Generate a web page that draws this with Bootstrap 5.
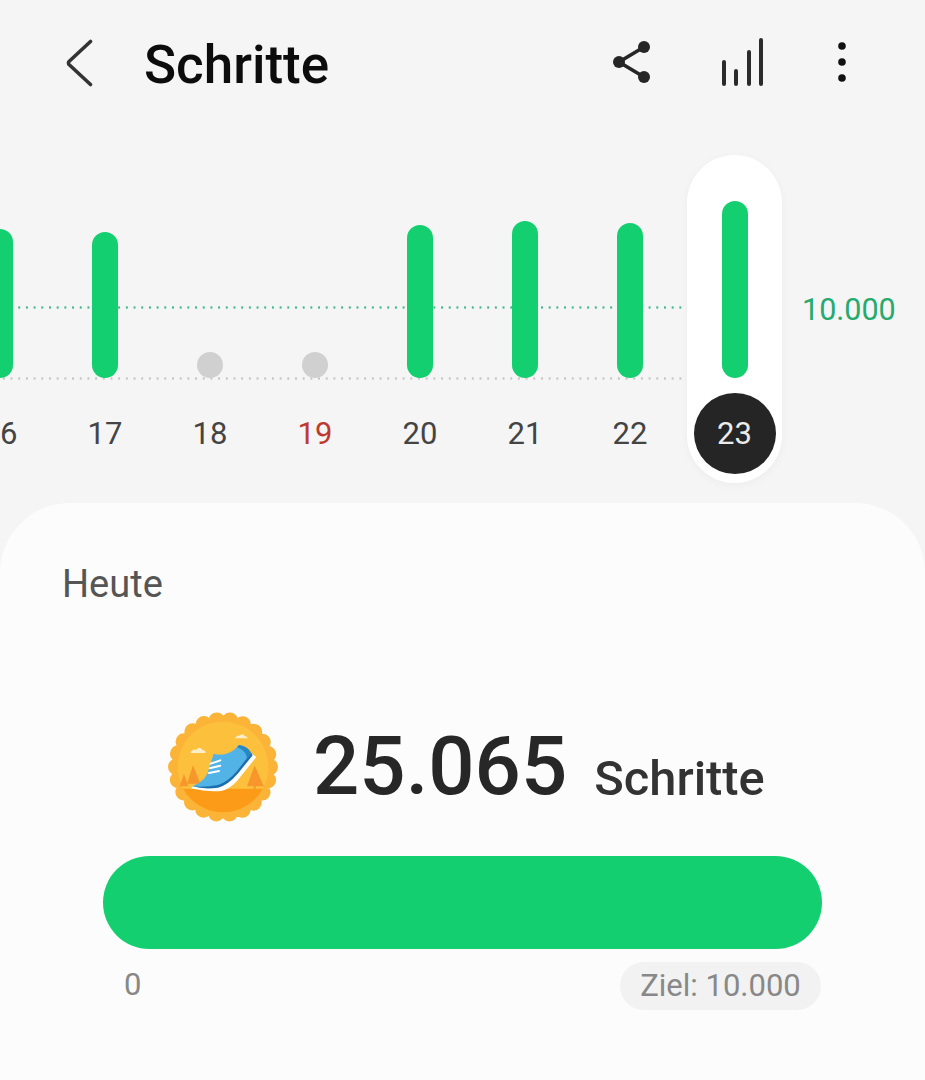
<!DOCTYPE html>
<html lang="de">
<head>
    <meta charset="UTF-8" />
    <meta name="viewport" content="width=device-width, initial-scale=1.0" />
    <title>Schritte</title>
    <link href="https://cdn.jsdelivr.net/npm/bootstrap@5.3.3/dist/css/bootstrap.min.css" rel="stylesheet">
    <style>
        body {
            background-color: #f5f5f5;
            font-family: Roboto, "Liberation Sans", sans-serif;
            overflow: hidden;
        }

        .screen {
            width: 925px;
            height: 1080px;
            overflow: hidden;
        }

        .top-bar {
            height: 128px;
            padding-left: 66px;
        }

        .back-icon {
            margin-bottom: 3px;
        }

        .top-title {
            font-size: 53px;
            font-weight: 500;
            color: #0c0c0c;
            line-height: 1;
            margin: 2px 0 0 50px;
        }

        .top-icons {
            margin-left: auto;
            margin-bottom: 4px;
            padding-right: 77px;
            gap: 71px;
        }

        .chart-area {
            height: 375px;
            padding-top: 27px;
        }

        .grid-line {
            position: absolute;
            left: 0;
            width: 700px;
            height: 3px;
            background-size: 7.7px 3px;
            background-repeat: repeat-x;
        }

        .grid-goal {
            top: 178px;
            background-image: radial-gradient(circle, #3fb98a 1px, transparent 1.3px);
        }

        .grid-zero {
            top: 249px;
            background-image: radial-gradient(circle, #c4c4c4 1px, transparent 1.3px);
        }

        .day-row {
            margin-left: -52.5px;
        }

        .day-col {
            width: 105px;
            flex: none;
        }

        .day-pill {
            width: 95px;
            height: 328px;
            margin: 0 auto;
            border-radius: 48px;
        }

        .day-pill.active {
            margin-left: 4.5px;
            background-color: #fff;
            box-shadow: 0 2px 8px rgba(0, 0, 0, 0.04);
        }

        .day-plot {
            height: 223px;
        }

        .day-bar {
            width: 26px;
            border-radius: 13px;
            background-color: #13cf70;
        }

        .day-bar.empty {
            background-color: #d0d0d0;
        }

        .day-label {
            width: 82px;
            height: 81px;
            margin-top: 15px;
            padding-top: 2px;
            font-size: 31px;
            color: #444;
            border-radius: 50%;
        }

        .day-label.sunday {
            color: #c0392f;
        }

        .day-pill.active .day-label {
            background-color: #252525;
            color: #ececec;
        }

        .goal-mark {
            font-size: 30.5px;
            line-height: 36px;
            color: #25aa70;
            margin: 137px 0 0 14.500px;
            flex: none;
        }

        .today-panel {
            height: 577px;
            background-color: #fcfcfc;
            border-radius: 70px 70px 0 0;
            padding: 58px 103px 0;
        }

        .today-label {
            font-size: 38px;
            line-height: 46px;
            color: #555;
            margin-left: -41px;
        }

        .step-line {
            margin-top: 102px;
            height: 116px;
        }

        .step-badge {
            margin: 0 35px 0 65px;
        }

        .step-count {
            font-size: 81.5px;
            font-weight: 500;
            line-height: 1;
            color: #272727;
        }

        .step-unit {
            font-size: 48.8px;
            font-weight: 500;
            line-height: 1;
            color: #333;
            margin-left: 27px;
            margin-top: 24px;
        }

        .goal-bar {
            height: 93px;
            margin-top: 31px;
            border-radius: 47px;
            background-color: #13cf70;
        }

        .scale-row {
            margin-top: 13px;
            font-size: 31px;
            color: #888;
        }

        .scale-zero {
            margin-left: 21px;
            margin-bottom: 2px;
        }

        .goal-chip {
            height: 48px;
            width: 201px;
            border-radius: 24px;
            background-color: #f2f2f2;
            margin-right: 1px;
        }
    </style>
</head>
<body>
    <div class="screen">
        <div class="top-bar d-flex align-items-center">
            <svg class="back-icon" width="28" height="48" viewBox="0 0 28 48" fill="none" stroke="#333" stroke-width="3.6" stroke-linecap="round" stroke-linejoin="round"><path d="M24.5 2.5 L3 22.500 Q2 24 3 25.500 L24.500 45.500"/></svg>
            <div class="top-title">Schritte</div>
            <div class="top-icons d-flex align-items-center">
                <svg width="37" height="42" viewBox="0 0 37 42"><path d="M31 6 L6 21 L31 36" fill="none" stroke="#262626" stroke-width="3.600"/><circle cx="31" cy="6" r="6" fill="#262626"/><circle cx="6" cy="21" r="6" fill="#262626"/><circle cx="31" cy="36" r="6" fill="#262626"/></svg>
                <svg width="44" height="48" viewBox="0 0 44 48" fill="none" stroke="#2b2b2b" stroke-width="4" stroke-linecap="round"><path d="M3 46 V24 M15 46 V33 M28 46 V14 M40 46 V2"/></svg>
                <svg width="12" height="42" viewBox="0 0 12 42" fill="#111"><circle cx="6" cy="5" r="3.800"/><circle cx="6" cy="21" r="3.800"/><circle cx="6" cy="37" r="3.800"/></svg>
            </div>
        </div>

        <div class="chart-area position-relative">
            <div class="grid-line grid-goal"></div>
            <div class="grid-line grid-zero"></div>
            <div class="day-row d-flex position-relative" id="dayRow"></div>
        </div>

        <div class="today-panel">
            <div class="today-label">Heute</div>
            <div class="step-line d-flex align-items-center">
                <svg class="step-badge" width="110" height="110" viewBox="55 35 330 330">
                    <circle cx="220" cy="200" r="140" fill="#fbb437" stroke="#fbb437" stroke-width="50" stroke-linecap="round" stroke-dasharray="0 39.980"/>
                    <circle cx="220" cy="200" r="136" fill="#fcc03c"/>
                    <path d="M100.500 265 H339.500 A136 136 0 0 1 100.500 265 Z" fill="#fb9b18"/>
                    <path d="M315 195 L342 258 H318 V266 H312 V258 H292 Z" fill="#f7962a"/>
                    <path d="M130 195 L152 250 H112 Z" fill="#f7962a"/>
                    <path d="M103 220 L116 258 H90 Z" fill="#f7962a"/>
                    <path d="M122 158 Q128 146 140 148 Q150 136 160 150 Q168 150 168 158 Z" fill="#fdeecb"/>
                    <path d="M255 114 Q262 104 270 106 Q278 96 286 108 Q294 108 294 114 Z" fill="#fdeecb"/>
                    <path d="M124 264 Q175 276 215 272 Q240 266 262 242 L320 170 L306 160 L200 250 L130 258 Z" fill="#fff"/>
                    <path d="M128 258 Q172 240 178 205 L192 160 Q222 170 254 148 L268 134 Q295 138 306 160 L262 215 Q235 250 205 258 Q165 266 128 258 Z" fill="#52b3e6"/>
                    <path d="M128 258 Q165 262 205 254 Q235 244 262 212 L304 158 L309 165 L264 220 Q235 254 205 262 Q165 268 128 258 Z" fill="#1c6fae"/>
                    <path d="M268 134 Q295 138 306 160 L292 174 Q288 150 262 141 Z" fill="#2b87c4"/>
                    <path d="M183 190 L212 180 M180 204 L212 196 M178 218 L208 212" stroke="#fff" stroke-width="6" stroke-linecap="round" fill="none"/>
                </svg>
                <div class="step-count">25.065</div>
                <div class="step-unit">Schritte</div>
            </div>
            <div class="goal-bar"></div>
            <div class="scale-row d-flex justify-content-between align-items-center">
                <span class="scale-zero">0</span>
                <span class="goal-chip d-flex align-items-center justify-content-center">Ziel: 10.000</span>
            </div>
        </div>
    </div>

    <script>
        // bar heights in px, 26 = no data (grey dot)
        const days = [
            { day: 16, h: 149 },
            { day: 17, h: 146 },
            { day: 18, h: 26, empty: true },
            { day: 19, h: 26, empty: true, sunday: true },
            { day: 20, h: 153 },
            { day: 21, h: 157 },
            { day: 22, h: 155 },
            { day: 23, h: 177, active: true }
        ];

        const dayRow = document.getElementById('dayRow');
        days.forEach(d => {
            dayRow.innerHTML += `
                <div class="day-col">
                    <div class="day-pill ${d.active ? 'active' : ''} d-flex flex-column align-items-center">
                        <div class="day-plot d-flex align-items-end">
                            <div class="day-bar ${d.empty ? 'empty' : ''}" style="height:${d.h}px"></div>
                        </div>
                        <div class="day-label d-flex align-items-center justify-content-center ${d.sunday ? 'sunday' : ''}">${d.day}</div>
                    </div>
                </div>`;
        });
        dayRow.innerHTML += '<div class="goal-mark">10.000</div>';
    </script>
    <script src="https://cdn.jsdelivr.net/npm/bootstrap@5.3.3/dist/js/bootstrap.bundle.min.js"></script>
</body>
</html>
